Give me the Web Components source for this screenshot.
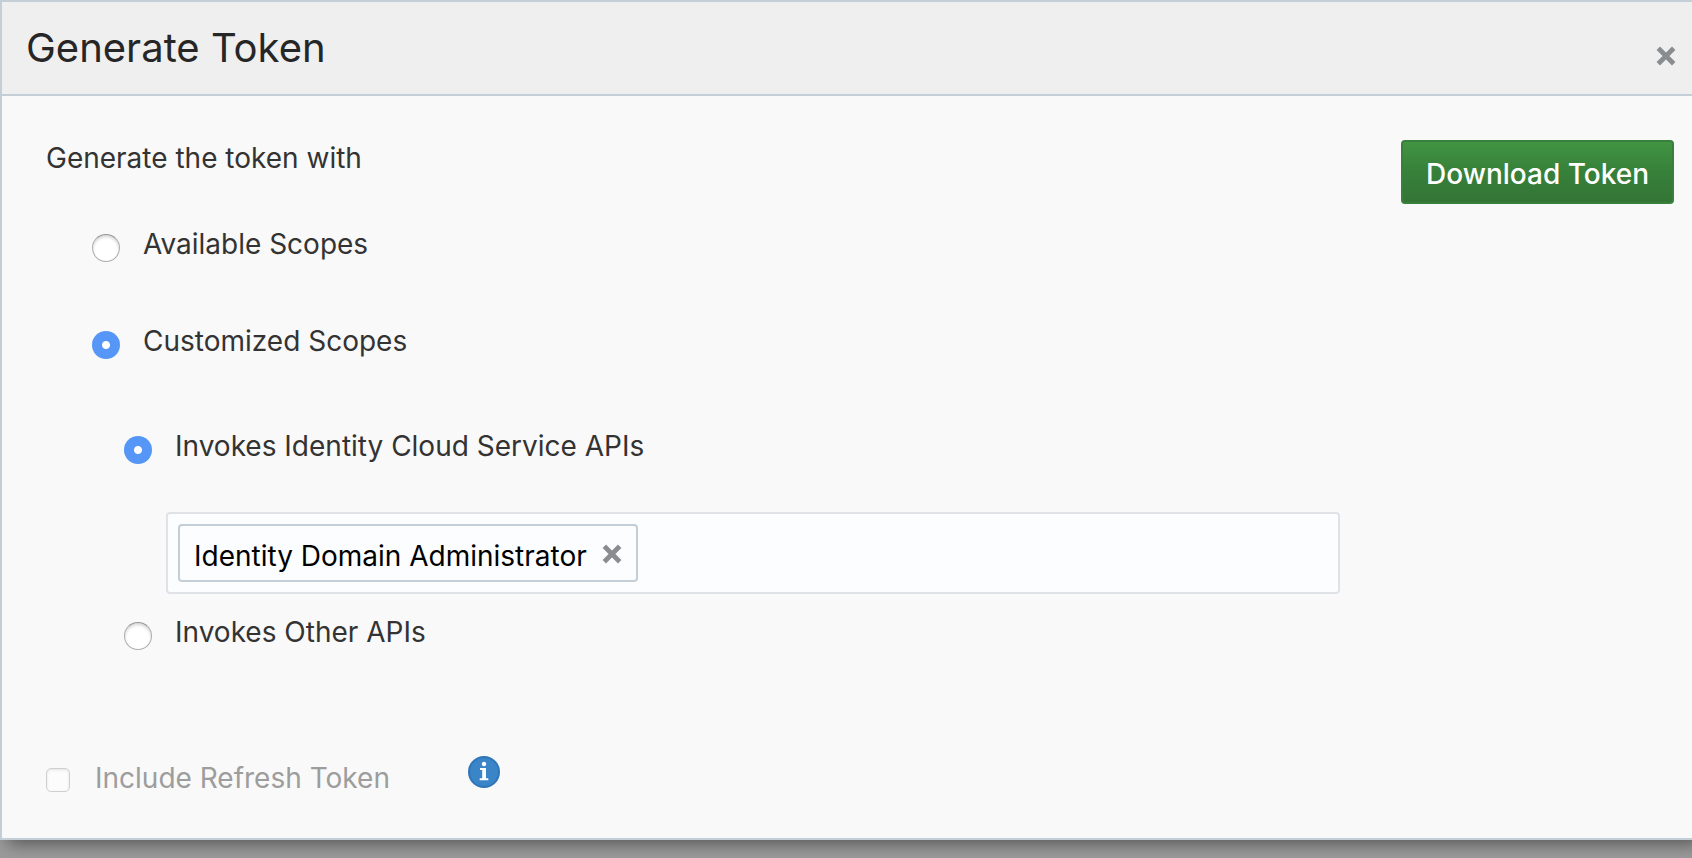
<!DOCTYPE html>
<html lang="en">
<head>
<meta charset="utf-8">
<meta name="viewport" content="width=device-width, initial-scale=1">
<title>Generate Token</title>
<style>
  html { background: #9b9b9b; }
  body { margin: 0; min-height: 100vh; font: 400 28px/36px Inter, "Liberation Sans", sans-serif; color: #333; }
</style>
</head>
<body>
<token-dialog>
  <span slot="title">Generate Token</span>
  <token-form></token-form>
</token-dialog>

<script>
class BaseElement extends HTMLElement {
  constructor() {
    super();
    this.attachShadow({ mode: 'open' }).innerHTML = this.constructor.markup;
  }
}

// Cross icon shared by the dialog header and the chip.
customElements.define('cross-icon', class extends BaseElement {
  static markup = `
    <style>
      :host { display: block; width: 20px; height: 20px; }
      svg { display: block; width: 100%; height: 100%; }
    </style>
    <svg viewBox="0 0 20 20" aria-hidden="true"><path d="M2.300 2.300L17.700 17.700M17.700 2.300L2.300 17.700" fill="none" stroke="#8a8d8f" stroke-width="4.800"/></svg>`;
});

customElements.define('info-tip', class extends BaseElement {
  static markup = `
    <style>
      :host { display: block; width: 32px; height: 32px; }
      button { display: block; width: 32px; height: 32px; padding: 0; border: 0; background: none; border-radius: 50%; }
      svg { display: block; }
    </style>
    <button type="button" aria-label="More information">
      <svg width="32" height="32" viewBox="0 0 32 32" aria-hidden="true">
        <circle cx="16" cy="16" r="15" fill="#3a84c8" stroke="#2f76b8" stroke-width="2"/>
        <circle cx="16" cy="8" r="2.200" fill="#fff"/>
        <path d="M12 12H18V22.300H20.300V24.300H11.700V22.300H14.200V14H12Z" fill="#fff"/>
      </svg>
    </button>`;
});

// Radio button or tick box with its label; type, name, checked and disabled are passed through.
customElements.define('choice-row', class extends BaseElement {
  static markup = `
    <style>
      :host { display: block; }
      label { display: flex; align-items: flex-start; gap: 23px; width: fit-content; }
      input {
        appearance: none; box-sizing: border-box; flex: none;
        width: 28px; height: 28px; margin: 8px 0 0; background: #fff;
        border: 1px solid #adadad; border-top-color: #959595; border-radius: 50%;
        box-shadow: inset 0 2px 3px rgba(0, 0, 0, .16);
      }
      input:checked {
        border: 0; box-shadow: none;
        background: radial-gradient(circle, #fff 3.5px, #5596f6 4.5px);
      }
      input[type=checkbox] {
        width: 24px; height: 24px; border-color: #cfcfcf; border-radius: 5px; background: #fcfcfc;
        box-shadow: inset 0 1px 3px rgba(0, 0, 0, .1);
      }
      label:has(input:disabled) { color: #9d9d9d; gap: 25px; }
    </style>
    <label><input><span><slot></slot></span></label>`;
  connectedCallback() {
    const input = this.shadowRoot.querySelector('input');
    input.type = this.getAttribute('type') || 'radio';
    input.name = this.getAttribute('name') || '';
    input.checked = this.hasAttribute('checked');
    input.disabled = this.hasAttribute('disabled');
    input.addEventListener('change', () => {
      if (input.type !== 'radio') return;
      for (const row of this.getRootNode().querySelectorAll(`choice-row[name="${input.name}"]`)) {
        if (row !== this) row.shadowRoot.querySelector('input').checked = false;
      }
    });
  }
});

customElements.define('scope-chip', class extends BaseElement {
  static markup = `
    <style>
      :host {
        display: flex; align-items: center; box-sizing: border-box; height: 58px; padding: 2px 14px 0;
        border: 2px solid #c4ced7; border-radius: 4px; color: #000; gap: 15px;
      }
      span { padding-top: 4px; white-space: nowrap; }
      button { padding: 0; border: 0; background: none; }
    </style>
    <span><slot></slot></span>
    <button type="button" aria-label="Remove"><cross-icon></cross-icon></button>`;
});

customElements.define('scope-field', class extends BaseElement {
  static markup = `
    <style>
      :host {
        display: flex; box-sizing: border-box; padding: 10px;
        border: 2px solid #dfe3e7; border-radius: 4px; background: #fcfdff;
      }
    </style>
    <slot></slot>`;
});

customElements.define('primary-button', class extends BaseElement {
  static markup = `
    <style>
      :host { display: block; flex: none; }
      button {
        display: block; box-sizing: border-box; height: 64px; padding: 4px 23px 0;
        border: 2px solid #38803b; border-radius: 4px;
        background: linear-gradient(#419442, #37803a 50%, #347536);
        color: #fff; font: inherit; font-weight: 500; white-space: nowrap;
      }
    </style>
    <button type="button"><slot></slot></button>`;
});

customElements.define('token-form', class extends BaseElement {
  static markup = `
    <style>
      :host { display: block; }
      form { padding: 44px 18px 42px 44px; }
      .top { display: flex; justify-content: space-between; align-items: flex-start; margin-bottom: 22px; }
      .choices { padding-left: 46px; }
      .nested { padding: 69px 0 0 32px; }
      .choices > choice-row + choice-row { margin-top: 61px; }
      scope-field { margin: 48px 334px 20px 42px; }
      .refresh { display: flex; align-items: flex-start; gap: 78px; margin-top: 110px; }
      info-tip { margin-top: -4px; }
    </style>
    <form>
      <div class="top">
        <span>Generate the token with</span>
        <primary-button>Download Token</primary-button>
      </div>
      <div class="choices">
        <choice-row name="scopes">Available Scopes</choice-row>
        <choice-row name="scopes" checked>Customized Scopes</choice-row>
        <div class="nested">
          <choice-row name="apis" checked>Invokes Identity Cloud Service APIs</choice-row>
          <scope-field><scope-chip>Identity Domain Administrator</scope-chip></scope-field>
          <choice-row name="apis">Invokes Other APIs</choice-row>
        </div>
      </div>
      <div class="refresh">
        <choice-row type="checkbox" disabled>Include Refresh Token</choice-row>
        <info-tip></info-tip>
      </div>
    </form>`;
});

customElements.define('token-dialog', class extends BaseElement {
  static markup = `
    <style>
      :host {
        display: block; border: 2px solid #c4ced7; border-right: 0; background: #f9f9f9;
        box-shadow: 8px 4px 16px rgba(0, 0, 0, .45);
      }
      header {
        display: flex; justify-content: space-between; align-items: flex-start;
        padding: 22px 16px 22px 24px; background: #efefef; border-bottom: 2px solid #c4ced7;
      }
      h1 { margin: 0; font-size: 40px; line-height: 48px; font-weight: 400; color: #262626; }
      button { margin-top: 22px; padding: 0; border: 0; background: none; }
    </style>
    <header>
      <h1><slot name="title"></slot></h1>
      <button type="button" aria-label="Close"><cross-icon></cross-icon></button>
    </header>
    <slot></slot>`;
});
</script>
</body>
</html>
